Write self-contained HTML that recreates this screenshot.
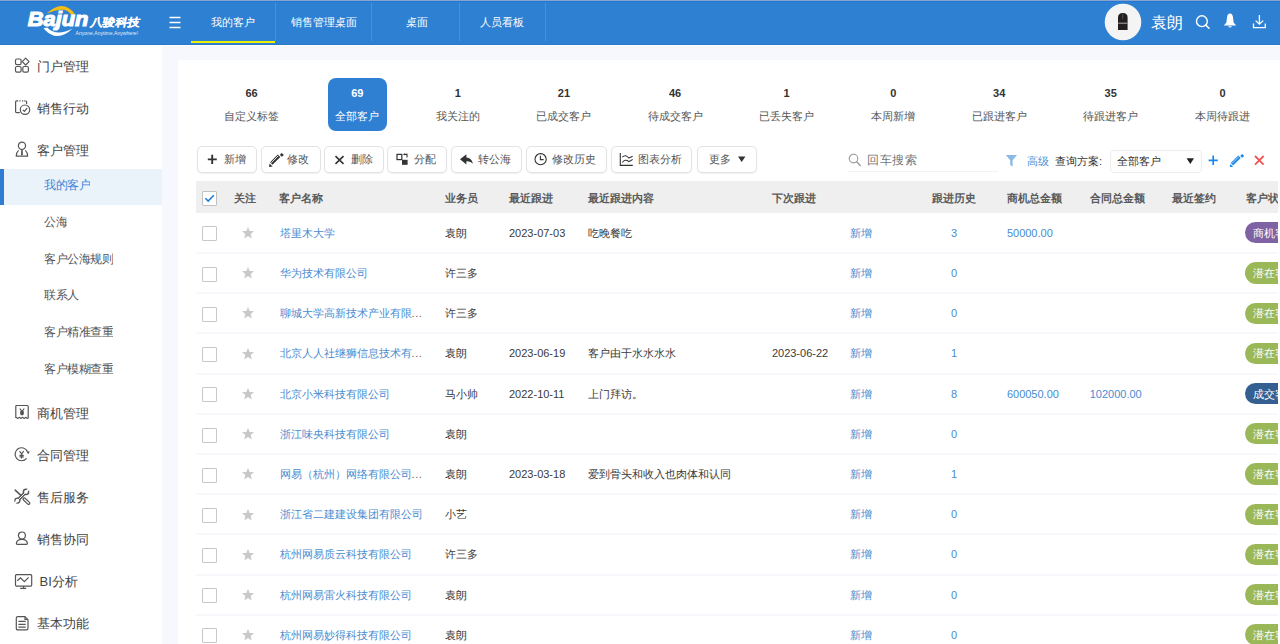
<!DOCTYPE html><html><head><meta charset="utf-8"><style>
html,body{margin:0;padding:0;width:1280px;height:644px;overflow:hidden;background:#fff;font-family:'Liberation Sans',sans-serif}
.t{position:absolute;white-space:nowrap}
svg{overflow:visible}
</style></head><body>
<div style="position:absolute;left:0px;top:0px;width:1280px;height:45px;background:#2e80d2"></div>
<div style="position:absolute;left:0px;top:0px;width:1280px;height:1px;background:#85a4d2"></div>
<div style="position:absolute;left:0px;top:1px;width:1280px;height:1px;background:#2577d0"></div>
<div style="position:absolute;left:0px;top:44px;width:1280px;height:1px;background:#2a78c8"></div>
<svg style="position:absolute;left:20px;top:0px" width="130" height="44" viewBox="0 0 130 44">
<path d="M26.3 13.8 Q43.35 -2 55.2 14.6 L51 14.8 Q46.25 5 26.3 13.8 Z" fill="#f6bd16"/>
<path d="M23.4 28.2 Q36.9 43.75 52.6 28.6 Q36.2 36.95 27.2 27.4 Z" fill="#fff"/>
<text x="7.8" y="25.9" font-family="Liberation Sans" font-weight="bold" font-style="italic" font-size="20" fill="#fff" stroke="#fff" stroke-width="1.1" textLength="60.6" lengthAdjust="spacingAndGlyphs">Bajun</text>
<text x="75.2" y="25.6" transform="skewX(-11)" font-weight="bold" font-size="11" fill="#fff" stroke="#fff" stroke-width="0.15" textLength="49" lengthAdjust="spacingAndGlyphs">八骏科技</text>
<text x="55.6" y="35.2" font-family="Liberation Sans" font-size="5" fill="#fff" fill-opacity="0.9" textLength="62.5" lengthAdjust="spacingAndGlyphs">Anyone,Anytime,Anywhere!</text>
</svg>
<svg style="position:absolute;left:169px;top:16px" width="13" height="13" viewBox="0 0 13 13"><path d="M0.5 1.5H11.5M0.5 6.5H11.5M0.5 11.5H11.5" stroke="#fff" stroke-width="1.4"/></svg>
<div class="t" style="left:83.00px;width:300px;text-align:center;top:11.70px;font-size:11px;line-height:20px;color:#fff;font-weight:normal;">我的客户</div>
<div class="t" style="left:173.60px;width:300px;text-align:center;top:11.70px;font-size:11px;line-height:20px;color:#fff;font-weight:normal;">销售管理桌面</div>
<div class="t" style="left:267.30px;width:300px;text-align:center;top:11.70px;font-size:11px;line-height:20px;color:#fff;font-weight:normal;">桌面</div>
<div class="t" style="left:352.30px;width:300px;text-align:center;top:11.70px;font-size:11px;line-height:20px;color:#fff;font-weight:normal;">人员看板</div>
<div style="position:absolute;left:191px;top:41px;width:84px;height:2px;background:#eef000"></div>
<div style="position:absolute;left:275px;top:3px;width:1px;height:38px;background:rgba(255,255,255,0.13)"></div>
<div style="position:absolute;left:371px;top:3px;width:1px;height:38px;background:rgba(255,255,255,0.13)"></div>
<div style="position:absolute;left:459px;top:3px;width:1px;height:38px;background:rgba(255,255,255,0.13)"></div>
<div style="position:absolute;left:545px;top:3px;width:1px;height:38px;background:rgba(255,255,255,0.13)"></div>
<svg style="position:absolute;left:1104px;top:3px" width="38" height="38" viewBox="0 0 38 38"><circle cx="19" cy="19" r="18.3" fill="#f4f4f4"/>
<path d="M14 26.9 V14.5 Q14 10 18.9 10 Q23.6 10 23.6 14.5 V26.9 Z" fill="#231f20"/>
<path d="M14.2 20.2 H23.4" stroke="#e8e8e8" stroke-width="0.7"/>
<path d="M18.8 11 V16" stroke="#888" stroke-width="0.5"/></svg>
<div class="t" style="left:1151px;top:10.50px;font-size:16px;line-height:24px;color:#fff;font-weight:normal;">袁朗</div>
<svg style="position:absolute;left:1194px;top:13px" width="18" height="18" viewBox="0 0 18 18"><circle cx="7.9" cy="8.2" r="5.4" fill="none" stroke="#fff" stroke-width="1.4"/><path d="M11.8 12.1 L15 15.3" stroke="#fff" stroke-width="1.5" stroke-linecap="round"/></svg>
<svg style="position:absolute;left:1222px;top:12px" width="16" height="17" viewBox="0 0 16 17"><path d="M8 1.6 Q10.6 1.6 11 5.5 L11.6 10.6 L14.2 13.4 H1.8 L4.4 10.6 L5 5.5 Q5.4 1.6 8 1.6 Z" fill="#fff"/><path d="M6.2 14.2 H9.8 Q9.6 15.6 8 15.6 Q6.4 15.6 6.2 14.2Z" fill="#fff"/></svg>
<svg style="position:absolute;left:1251px;top:13px" width="17" height="17" viewBox="0 0 17 17"><path d="M8.4 2 V11" stroke="#fff" stroke-width="1.3"/><path d="M4.6 7.6 L8.4 11.2 L12.2 7.6" fill="none" stroke="#fff" stroke-width="1.3"/><path d="M2.5 10.5 V14.6 H14.3 V10.5" fill="none" stroke="#fff" stroke-width="1.3"/></svg>
<div style="position:absolute;left:0px;top:45px;width:162px;height:599px;background:#fff"></div>
<div style="position:absolute;left:162px;top:45px;width:1118px;height:599px;background:#f6f8fd"></div>
<div style="position:absolute;left:162px;top:45px;width:1118px;height:1px;background:#fff"></div>
<div style="position:absolute;left:0px;top:169px;width:162px;height:36px;background:#ebf3fa"></div>
<div style="position:absolute;left:0px;top:169px;width:4px;height:36px;background:#2e7dd2"></div>
<div class="t" style="left:36.6px;top:56.50px;font-size:13px;line-height:20px;color:#444;font-weight:normal;">门户管理</div>
<div class="t" style="left:36.6px;top:98.80px;font-size:13px;line-height:20px;color:#444;font-weight:normal;">销售行动</div>
<div class="t" style="left:36.6px;top:140.80px;font-size:13px;line-height:20px;color:#444;font-weight:normal;">客户管理</div>
<div class="t" style="left:36.6px;top:403.80px;font-size:13px;line-height:20px;color:#444;font-weight:normal;">商机管理</div>
<div class="t" style="left:36.6px;top:446.00px;font-size:13px;line-height:20px;color:#444;font-weight:normal;">合同管理</div>
<div class="t" style="left:36.6px;top:487.90px;font-size:13px;line-height:20px;color:#444;font-weight:normal;">售后服务</div>
<div class="t" style="left:36.6px;top:530.20px;font-size:13px;line-height:20px;color:#444;font-weight:normal;">销售协同</div>
<div class="t" style="left:39.6px;top:572.10px;font-size:13px;line-height:20px;color:#444;font-weight:normal;">BI分析</div>
<div class="t" style="left:36.6px;top:614.30px;font-size:13px;line-height:20px;color:#444;font-weight:normal;">基本功能</div>
<div class="t" style="left:44px;top:175.00px;font-size:23.0px;line-height:40px;color:#3a84d6;font-weight:normal;transform:scale(0.5);transform-origin:0 0;">我的客户</div>
<div class="t" style="left:44px;top:211.70px;font-size:23.0px;line-height:40px;color:#555;font-weight:normal;transform:scale(0.5);transform-origin:0 0;">公海</div>
<div class="t" style="left:44px;top:248.60px;font-size:23.0px;line-height:40px;color:#555;font-weight:normal;transform:scale(0.5);transform-origin:0 0;">客户公海规则</div>
<div class="t" style="left:44px;top:285.30px;font-size:23.0px;line-height:40px;color:#555;font-weight:normal;transform:scale(0.5);transform-origin:0 0;">联系人</div>
<div class="t" style="left:44px;top:322.30px;font-size:23.0px;line-height:40px;color:#555;font-weight:normal;transform:scale(0.5);transform-origin:0 0;">客户精准查重</div>
<div class="t" style="left:44px;top:358.70px;font-size:23.0px;line-height:40px;color:#555;font-weight:normal;transform:scale(0.5);transform-origin:0 0;">客户模糊查重</div>
<svg style="position:absolute;left:14px;top:57px" width="16" height="16" viewBox="0 0 16 16"><rect x="1.5" y="2" width="5.6" height="5.6" rx="1.4" fill="none" stroke="#555" stroke-width="1.2"/><rect x="1.5" y="9.5" width="5.6" height="5.6" rx="1.4" fill="none" stroke="#555" stroke-width="1.2"/><rect x="8.8" y="9.5" width="5.6" height="5.6" rx="1.4" fill="none" stroke="#555" stroke-width="1.2"/><path d="M11.65 1.2 L15.05 4.6 L11.65 8 L8.25 4.6 Z" stroke-linejoin="round" fill="none" stroke="#555" stroke-width="1.2"/></svg>
<svg style="position:absolute;left:14px;top:99px" width="17" height="17" viewBox="0 0 17 17"><path d="M5.8 13.6 H2.8 Q1.6 13.6 1.6 12.4 V3 Q1.6 1.9 2.8 1.9 H4.2" fill="none" stroke="#555" stroke-width="1.2"/><path d="M5.4 1.9 H6.6 M8 1.9 H9 M9.8 1.9 H10.8" fill="none" stroke="#555" stroke-width="1.2"/><path d="M11.4 1.9 Q12.6 1.9 12.6 3.1 V5" fill="none" stroke="#555" stroke-width="1.2"/><circle cx="11" cy="10.7" r="4.7" fill="none" stroke="#555" stroke-width="1.2"/><path d="M8.9 10.8 L10.5 12.4 L13.1 9.2" fill="none" stroke="#555" stroke-width="1.2"/></svg>
<svg style="position:absolute;left:15px;top:141px" width="15" height="17" viewBox="0 0 15 17"><circle cx="6.95" cy="4.8" r="3.6" fill="none" stroke="#555" stroke-width="1.2"/><path d="M3.6 9.4 Q1.3 11.3 1.3 15.2 H12.6 Q12.6 11.3 10.3 9.4" fill="none" stroke="#555" stroke-width="1.2"/><path d="M6.2 8.9 H7.7 L7.9 13.4 L6.95 14.4 L6 13.4 Z" fill="#555"/></svg>
<svg style="position:absolute;left:14px;top:404px" width="16" height="16" viewBox="0 0 16 16"><path d="M1.8 13.9 V2.4 Q1.8 1.5 2.7 1.5 H13.3 Q14.2 1.5 14.2 2.4 V13.9 Q13.4 14.9 12.6 13.9 Q11.8 12.9 11 13.9 Q10.2 14.9 9.4 13.9 Q8.6 12.9 7.8 13.9 Q7 14.9 6.2 13.9 Q5.4 12.9 4.6 13.9 Q3.8 14.9 3 13.9 Q2.4 13.2 1.8 13.9" fill="none" stroke="#555" stroke-width="1.2"/><path d="M5.8 4.5 L8 7.5 L10.2 4.5" fill="none" stroke="#555" stroke-width="1.2"/><ellipse cx="8" cy="9" rx="2" ry="2.4" fill="#555"/></svg>
<svg style="position:absolute;left:14px;top:446px" width="17" height="17" viewBox="0 0 17 17"><path d="M12.58 12.43 A6.5 6.5 0 1 1 13.49 5.5" fill="none" stroke="#555" stroke-width="1.2"/><path d="M12.4 5.2 L15.8 5.4 L14.2 8.2 Z" fill="#555"/><path d="M5.5 5.2 L7.6 7.8 L9.7 5.2 M7.6 7.8 V12.4 M5.5 9.3 H9.7 M5.5 10.9 H9.7" fill="none" stroke="#555" stroke-width="1.15"/></svg>
<svg style="position:absolute;left:14px;top:488px" width="17" height="17" viewBox="0 0 17 17"><path d="M1.2 2.1 L7.2 7.6" stroke="#555" stroke-width="1.5" stroke-linecap="round"/><path d="M3.4 12.6 L12 3.9" stroke="#555" stroke-width="3.4"/><circle cx="12" cy="3.9" r="3.3" fill="#555"/><circle cx="3.4" cy="12.6" r="3.1" fill="#555"/><path d="M3.4 12.6 L12 3.9" stroke="#fff" stroke-width="1"/><circle cx="12" cy="3.9" r="1.9" fill="#fff"/><circle cx="3.4" cy="12.6" r="1.8" fill="#fff"/><path d="M12 3.9 L16 -0.1" stroke="#fff" stroke-width="2"/><path d="M3.4 12.6 L-0.6 16.6" stroke="#fff" stroke-width="2"/><path d="M10.3 11.1 L14.6 15.2" stroke="#555" stroke-width="3.6" stroke-linecap="round"/><path d="M10.3 11.1 L14.6 15.2" stroke="#fff" stroke-width="1.2" stroke-linecap="round"/></svg>
<svg style="position:absolute;left:15px;top:531px" width="15" height="15" viewBox="0 0 15 15"><circle cx="6.9" cy="4.5" r="3.5" fill="none" stroke="#555" stroke-width="1.2"/><path d="M1.4 12.4 Q1.8 8.4 6.9 8.4 Q12 8.4 12.4 12.4 Q12.5 13.4 11.4 13.4 H2.4 Q1.3 13.4 1.4 12.4 Z" fill="none" stroke="#555" stroke-width="1.2"/></svg>
<svg style="position:absolute;left:14px;top:573px" width="19" height="17" viewBox="0 0 19 17"><rect x="1.5" y="1.7" width="16.2" height="11.4" rx="1" fill="none" stroke="#555" stroke-width="1.2"/><path d="M3.3 7.7 L6.5 4.8 L10.4 8.6 L14.6 4.3" fill="none" stroke="#555" stroke-width="1.2"/><path d="M9.6 13 V15" fill="none" stroke="#555" stroke-width="1.2"/><path d="M6.2 15.4 H12.2" stroke="#555" stroke-width="1.3"/></svg>
<svg style="position:absolute;left:15px;top:615px" width="15" height="17" viewBox="0 0 15 17"><path d="M2.9 1.7 H10 L13 4.7 V13.3 Q13 14.9 11.4 14.9 H2.9 Q1.3 14.9 1.3 13.3 V3.3 Q1.3 1.7 2.9 1.7 Z" fill="none" stroke="#555" stroke-width="1.2"/><path d="M10 1.9 V4.5 H12.8" fill="none" stroke="#555" stroke-width="1.2"/><path d="M3.4 6.4 H10.7 M3.4 9.3 H10.7 M3.4 12.1 H10.7" stroke="#555" stroke-width="1.3"/></svg>
<div style="position:absolute;left:178px;top:60px;width:1102px;height:584px;background:#fff"></div>
<div style="position:absolute;left:328px;top:78px;width:59px;height:53px;background:#2f80d3;border-radius:8px"></div>
<div class="t" style="left:101.50px;width:300px;text-align:center;top:83.20px;font-size:11px;line-height:20px;color:#333;font-weight:bold;">66</div>
<div class="t" style="left:101.50px;width:300px;text-align:center;top:106.00px;font-size:11px;line-height:20px;color:#555;font-weight:normal;">自定义标签</div>
<div class="t" style="left:207.30px;width:300px;text-align:center;top:83.20px;font-size:11px;line-height:20px;color:#fff;font-weight:bold;">69</div>
<div class="t" style="left:207.30px;width:300px;text-align:center;top:106.00px;font-size:11px;line-height:20px;color:#fff;font-weight:normal;">全部客户</div>
<div class="t" style="left:307.80px;width:300px;text-align:center;top:83.20px;font-size:11px;line-height:20px;color:#333;font-weight:bold;">1</div>
<div class="t" style="left:307.80px;width:300px;text-align:center;top:106.00px;font-size:11px;line-height:20px;color:#555;font-weight:normal;">我关注的</div>
<div class="t" style="left:413.90px;width:300px;text-align:center;top:83.20px;font-size:11px;line-height:20px;color:#333;font-weight:bold;">21</div>
<div class="t" style="left:413.90px;width:300px;text-align:center;top:106.00px;font-size:11px;line-height:20px;color:#555;font-weight:normal;">已成交客户</div>
<div class="t" style="left:525.10px;width:300px;text-align:center;top:83.20px;font-size:11px;line-height:20px;color:#333;font-weight:bold;">46</div>
<div class="t" style="left:525.10px;width:300px;text-align:center;top:106.00px;font-size:11px;line-height:20px;color:#555;font-weight:normal;">待成交客户</div>
<div class="t" style="left:636.60px;width:300px;text-align:center;top:83.20px;font-size:11px;line-height:20px;color:#333;font-weight:bold;">1</div>
<div class="t" style="left:636.60px;width:300px;text-align:center;top:106.00px;font-size:11px;line-height:20px;color:#555;font-weight:normal;">已丢失客户</div>
<div class="t" style="left:743.20px;width:300px;text-align:center;top:83.20px;font-size:11px;line-height:20px;color:#333;font-weight:bold;">0</div>
<div class="t" style="left:743.20px;width:300px;text-align:center;top:106.00px;font-size:11px;line-height:20px;color:#555;font-weight:normal;">本周新增</div>
<div class="t" style="left:849.20px;width:300px;text-align:center;top:83.20px;font-size:11px;line-height:20px;color:#333;font-weight:bold;">34</div>
<div class="t" style="left:849.20px;width:300px;text-align:center;top:106.00px;font-size:11px;line-height:20px;color:#555;font-weight:normal;">已跟进客户</div>
<div class="t" style="left:960.70px;width:300px;text-align:center;top:83.20px;font-size:11px;line-height:20px;color:#333;font-weight:bold;">35</div>
<div class="t" style="left:960.70px;width:300px;text-align:center;top:106.00px;font-size:11px;line-height:20px;color:#555;font-weight:normal;">待跟进客户</div>
<div class="t" style="left:1072.50px;width:300px;text-align:center;top:83.20px;font-size:11px;line-height:20px;color:#333;font-weight:bold;">0</div>
<div class="t" style="left:1072.50px;width:300px;text-align:center;top:106.00px;font-size:11px;line-height:20px;color:#555;font-weight:normal;">本周待跟进</div>
<div style="position:absolute;left:197px;top:146px;width:60px;height:27px;box-sizing:border-box;border:1px solid #e3e3e3;border-radius:5px;background:#fff;box-shadow:0 1px 1px rgba(0,0,0,0.06)"></div>
<div style="position:absolute;left:261px;top:146px;width:59.5px;height:27px;box-sizing:border-box;border:1px solid #e3e3e3;border-radius:5px;background:#fff;box-shadow:0 1px 1px rgba(0,0,0,0.06)"></div>
<div style="position:absolute;left:324px;top:146px;width:60px;height:27px;box-sizing:border-box;border:1px solid #e3e3e3;border-radius:5px;background:#fff;box-shadow:0 1px 1px rgba(0,0,0,0.06)"></div>
<div style="position:absolute;left:387px;top:146px;width:60px;height:27px;box-sizing:border-box;border:1px solid #e3e3e3;border-radius:5px;background:#fff;box-shadow:0 1px 1px rgba(0,0,0,0.06)"></div>
<div style="position:absolute;left:451px;top:146px;width:71px;height:27px;box-sizing:border-box;border:1px solid #e3e3e3;border-radius:5px;background:#fff;box-shadow:0 1px 1px rgba(0,0,0,0.06)"></div>
<div style="position:absolute;left:526px;top:146px;width:81px;height:27px;box-sizing:border-box;border:1px solid #e3e3e3;border-radius:5px;background:#fff;box-shadow:0 1px 1px rgba(0,0,0,0.06)"></div>
<div style="position:absolute;left:611px;top:146px;width:81px;height:27px;box-sizing:border-box;border:1px solid #e3e3e3;border-radius:5px;background:#fff;box-shadow:0 1px 1px rgba(0,0,0,0.06)"></div>
<div style="position:absolute;left:697px;top:146px;width:59.5px;height:27px;box-sizing:border-box;border:1px solid #e3e3e3;border-radius:5px;background:#fff;box-shadow:0 1px 1px rgba(0,0,0,0.06)"></div>
<div class="t" style="left:223.6px;top:148.80px;font-size:11px;line-height:20px;color:#555;font-weight:normal;">新增</div>
<div class="t" style="left:287px;top:148.80px;font-size:11px;line-height:20px;color:#555;font-weight:normal;">修改</div>
<div class="t" style="left:350.6px;top:148.80px;font-size:11px;line-height:20px;color:#555;font-weight:normal;">删除</div>
<div class="t" style="left:414px;top:148.80px;font-size:11px;line-height:20px;color:#555;font-weight:normal;">分配</div>
<div class="t" style="left:477.75px;top:148.80px;font-size:11px;line-height:20px;color:#555;font-weight:normal;">转公海</div>
<div class="t" style="left:551.9px;top:148.80px;font-size:11px;line-height:20px;color:#555;font-weight:normal;">修改历史</div>
<div class="t" style="left:637.75px;top:148.80px;font-size:11px;line-height:20px;color:#555;font-weight:normal;">图表分析</div>
<div class="t" style="left:708.5px;top:148.80px;font-size:11px;line-height:20px;color:#555;font-weight:normal;">更多</div>
<svg style="position:absolute;left:207px;top:154px" width="11" height="11" viewBox="0 0 11 11"><path d="M5.2 0.8 V10 M0.8 5.4 H9.8" stroke="#333" stroke-width="1.9"/></svg>
<svg style="position:absolute;left:268px;top:152px" width="16" height="16" viewBox="0 0 16 16"><path d="M3.3 11.5 L11.1 3.7" stroke="#333" stroke-width="3.4"/><path d="M3.4 10.7 L10.4 3.7" stroke="#fff" stroke-width="0.9"/><path d="M1 15 L1.5 11.4 L4.6 14.5 Z" fill="#333"/><path d="M11.9 2.9 L13.1 1.4 Q13.7 0.8 14.3 1.4 L15.3 2.4 Q15.9 3 15.3 3.6 L13.8 4.8 Z" fill="#333"/></svg>
<svg style="position:absolute;left:334px;top:155px" width="11" height="10" viewBox="0 0 11 10"><path d="M1.5 1.1 L9.5 8.9 M9.5 1.1 L1.5 8.9" stroke="#333" stroke-width="1.6"/></svg>
<svg style="position:absolute;left:396px;top:153px" width="13" height="13" viewBox="0 0 13 13"><rect x="1" y="1.4" width="4.8" height="5.2" fill="none" stroke="#333" stroke-width="1.2"/><rect x="6" y="6.8" width="5.6" height="5" fill="#333"/><path d="M8 1.4 H11 V4.6" fill="none" stroke="#333" stroke-width="1.1"/><path d="M7 1.4 L8.6 0.2 V2.6Z" fill="#333"/></svg>
<svg style="position:absolute;left:459px;top:153px" width="15" height="13" viewBox="0 0 15 13"><path d="M1 6.3 L7.4 1.2 V4.4 Q12.6 4.6 13.9 10.7 Q11.8 7.8 7.4 8.2 V11.4 Z" fill="#333"/></svg>
<svg style="position:absolute;left:534px;top:152px" width="14" height="14" viewBox="0 0 14 14"><circle cx="6.6" cy="7.2" r="5.6" fill="none" stroke="#333" stroke-width="1.1"/><path d="M6.4 3.8 V7.6 H9.6" fill="none" stroke="#333" stroke-width="1.1"/></svg>
<svg style="position:absolute;left:619px;top:152px" width="15" height="15" viewBox="0 0 15 15"><path d="M1.3 1 V13.4 H13.8" fill="none" stroke="#333" stroke-width="1.1"/><path d="M3.3 5.2 Q6.5 2 9.8 6 Q11.6 5.4 13.6 4.2 M3.3 10.5 Q6.5 6.6 9.8 9.6 Q11.6 9 13.6 7.4" fill="none" stroke="#333" stroke-width="1.1"/></svg>
<svg style="position:absolute;left:737px;top:155px" width="9" height="8" viewBox="0 0 9 8"><path d="M1 1.4 H8.4 L4.7 7 Z" fill="#333"/></svg>
<svg style="position:absolute;left:847px;top:153px" width="16" height="16" viewBox="0 0 16 16"><circle cx="6.5" cy="5.6" r="4.3" fill="none" stroke="#999" stroke-width="1.1"/><path d="M9.6 8.8 L13.6 13.1" stroke="#999" stroke-width="1.4"/></svg>
<div class="t" style="left:867.3px;top:150.30px;font-size:24.6px;line-height:40px;color:#777;font-weight:normal;transform:scale(0.5);transform-origin:0 0;">回车搜索</div>
<div style="position:absolute;left:848px;top:171px;width:150px;height:1px;background:#f0f4f7"></div>
<svg style="position:absolute;left:1005px;top:154px" width="13" height="13" viewBox="0 0 13 13"><path d="M0.8 1 H12 L7.6 6.2 V12.4 L5.2 11 V6.2 Z" fill="#8bb9e6"/></svg>
<div class="t" style="left:1027.3px;top:151.00px;font-size:11px;line-height:20px;color:#4a90d9;font-weight:normal;">高级</div>
<div class="t" style="left:1055px;top:151.00px;font-size:11px;line-height:20px;color:#333;font-weight:normal;">查询方案:</div>
<div style="position:absolute;left:1110px;top:150px;width:92px;height:23px;box-sizing:border-box;border:1px solid #ececec;border-radius:4px;background:#fff"></div>
<div class="t" style="left:1117px;top:150.80px;font-size:11px;line-height:20px;color:#333;font-weight:normal;">全部客户</div>
<svg style="position:absolute;left:1186px;top:157px" width="9" height="8" viewBox="0 0 9 8"><path d="M0.6 1.2 H8 L4.3 7 Z" fill="#222"/></svg>
<svg style="position:absolute;left:1208px;top:155px" width="11" height="11" viewBox="0 0 11 11"><path d="M5.2 0.6 V10 M0.6 5.3 H9.8" stroke="#1a88e8" stroke-width="1.7"/></svg>
<svg style="position:absolute;left:1228px;top:152px" width="16" height="16" viewBox="0 0 16 16"><path d="M3.9 12.3 L11.5 4.7" stroke="#1a88e8" stroke-width="3.4"/><path d="M4 11.5 L10.8 4.7" stroke="#cfe3fa" stroke-width="0.8"/><path d="M1.8 15 L2.2 11.9 L5.2 14.9 Z" fill="#1a88e8"/><path d="M12.3 3.9 L13.5 2.4 Q14.1 1.8 14.7 2.4 L15.7 3.4 Q16.3 4 15.7 4.6 L14.2 5.8 Z" fill="#1a88e8"/></svg>
<svg style="position:absolute;left:1254px;top:155px" width="11" height="11" viewBox="0 0 11 11"><path d="M1 1 L9.6 9.6 M9.6 1 L1 9.6" stroke="#f05656" stroke-width="1.8"/></svg>
<div style="position:absolute;left:196px;top:181px;width:1082px;height:463px;overflow:hidden">
<div style="position:absolute;left:0.00px;top:0.00px;width:1100px;height:32px;background:#efefef"></div>
<div style="position:absolute;left:6.00px;top:10.00px;width:15px;height:15px;box-sizing:border-box;border:1px solid #c2c2c2;border-radius:1px;background:#fff"></div>
<svg style="position:absolute;left:6px;top:9px" width="15" height="16"><path d="M3.4 8.2 L6.2 11 L11.8 5.2" fill="none" stroke="#1e7fd8" stroke-width="1.6"/></svg>
<div class="t" style="left:37.50px;top:7.00px;font-size:11px;line-height:20px;color:#5a5a5a;font-weight:bold;">关注</div>
<div class="t" style="left:83.40px;top:7.00px;font-size:11px;line-height:20px;color:#5a5a5a;font-weight:bold;">客户名称</div>
<div class="t" style="left:248.75px;top:7.00px;font-size:11px;line-height:20px;color:#5a5a5a;font-weight:bold;">业务员</div>
<div class="t" style="left:313.00px;top:7.00px;font-size:11px;line-height:20px;color:#5a5a5a;font-weight:bold;">最近跟进</div>
<div class="t" style="left:391.80px;top:7.00px;font-size:11px;line-height:20px;color:#5a5a5a;font-weight:bold;">最近跟进内容</div>
<div class="t" style="left:575.60px;top:7.00px;font-size:11px;line-height:20px;color:#5a5a5a;font-weight:bold;">下次跟进</div>
<div class="t" style="left:736.20px;top:7.00px;font-size:11px;line-height:20px;color:#5a5a5a;font-weight:bold;">跟进历史</div>
<div class="t" style="left:810.60px;top:7.00px;font-size:11px;line-height:20px;color:#5a5a5a;font-weight:bold;">商机总金额</div>
<div class="t" style="left:893.70px;top:7.00px;font-size:11px;line-height:20px;color:#5a5a5a;font-weight:bold;">合同总金额</div>
<div class="t" style="left:975.70px;top:7.00px;font-size:11px;line-height:20px;color:#5a5a5a;font-weight:bold;">最近签约</div>
<div class="t" style="left:1049.50px;top:7.00px;font-size:11px;line-height:20px;color:#5a5a5a;font-weight:bold;">客户状态</div>
<div style="position:absolute;left:0.00px;top:71.00px;width:1100px;height:2px;background:#f7f8fc"></div>
<div style="position:absolute;left:6.00px;top:45.00px;width:15px;height:15px;box-sizing:border-box;border:1px solid #c8c8c8;border-radius:1px;background:#fff"></div>
<svg style="position:absolute;left:45px;top:45px" width="14" height="14"><path d="M7 0.8 L8.6 5 L13.1 5.2 L9.6 8 L10.8 12.4 L7 9.9 L3.2 12.4 L4.4 8 L0.9 5.2 L5.4 5 Z" fill="#c8c8c8"/></svg>
<div class="t" style="left:83.60px;top:41.70px;font-size:11px;line-height:20px;color:#4a8cd0;font-weight:normal;">塔里木大学</div>
<div class="t" style="left:248.75px;top:41.70px;font-size:11px;line-height:20px;color:#3a3a3a;font-weight:normal;">袁朗</div>
<div class="t" style="left:313.00px;top:41.70px;font-size:11px;line-height:20px;color:#3a3a3a;font-weight:normal;">2023-07-03</div>
<div class="t" style="left:391.80px;top:41.70px;font-size:11px;line-height:20px;color:#3a3a3a;font-weight:normal;">吃晚餐吃</div>
<div class="t" style="left:653.90px;top:41.70px;font-size:11px;line-height:20px;color:#4a8cd0;font-weight:normal;">新增</div>
<div class="t" style="left:658.00px;width:200px;text-align:center;top:41.70px;font-size:11px;line-height:20px;color:#4a8cd0;font-weight:normal">3</div>
<div class="t" style="left:810.90px;top:41.70px;font-size:11px;line-height:20px;color:#4a8cd0;font-weight:normal;">50000.00</div>
<div style="position:absolute;left:1049.00px;top:41.10px;width:60px;height:21.4px;background:#7f62a4;border-radius:11px"></div>
<div class="t" style="left:1057.00px;top:41.70px;font-size:11px;line-height:20px;color:#fff;font-weight:normal;">商机客户</div>
<div style="position:absolute;left:0.00px;top:111.00px;width:1100px;height:2px;background:#f7f8fc"></div>
<div style="position:absolute;left:6.00px;top:86.00px;width:15px;height:15px;box-sizing:border-box;border:1px solid #c8c8c8;border-radius:1px;background:#fff"></div>
<svg style="position:absolute;left:45px;top:85px" width="14" height="14"><path d="M7 0.8 L8.6 5 L13.1 5.2 L9.6 8 L10.8 12.4 L7 9.9 L3.2 12.4 L4.4 8 L0.9 5.2 L5.4 5 Z" fill="#c8c8c8"/></svg>
<div class="t" style="left:83.60px;top:81.90px;font-size:11px;line-height:20px;color:#4a8cd0;font-weight:normal;">华为技术有限公司</div>
<div class="t" style="left:248.75px;top:81.90px;font-size:11px;line-height:20px;color:#3a3a3a;font-weight:normal;">许三多</div>
<div class="t" style="left:653.90px;top:81.90px;font-size:11px;line-height:20px;color:#4a8cd0;font-weight:normal;">新增</div>
<div class="t" style="left:658.00px;width:200px;text-align:center;top:81.90px;font-size:11px;line-height:20px;color:#4a8cd0;font-weight:normal">0</div>
<div style="position:absolute;left:1049.00px;top:81.30px;width:60px;height:21.4px;background:#9bb859;border-radius:11px"></div>
<div class="t" style="left:1057.00px;top:81.90px;font-size:11px;line-height:20px;color:#fff;font-weight:normal;">潜在客户</div>
<div style="position:absolute;left:0.00px;top:151.00px;width:1100px;height:2px;background:#f7f8fc"></div>
<div style="position:absolute;left:6.00px;top:126.00px;width:15px;height:15px;box-sizing:border-box;border:1px solid #c8c8c8;border-radius:1px;background:#fff"></div>
<svg style="position:absolute;left:45px;top:125px" width="14" height="14"><path d="M7 0.8 L8.6 5 L13.1 5.2 L9.6 8 L10.8 12.4 L7 9.9 L3.2 12.4 L4.4 8 L0.9 5.2 L5.4 5 Z" fill="#c8c8c8"/></svg>
<div class="t" style="left:83.60px;top:122.10px;font-size:11px;line-height:20px;color:#4a8cd0;font-weight:normal;">聊城大学高新技术产业有限<span style="color:#666;letter-spacing:0.5px">...</span></div>
<div class="t" style="left:248.75px;top:122.10px;font-size:11px;line-height:20px;color:#3a3a3a;font-weight:normal;">许三多</div>
<div class="t" style="left:653.90px;top:122.10px;font-size:11px;line-height:20px;color:#4a8cd0;font-weight:normal;">新增</div>
<div class="t" style="left:658.00px;width:200px;text-align:center;top:122.10px;font-size:11px;line-height:20px;color:#4a8cd0;font-weight:normal">0</div>
<div style="position:absolute;left:1049.00px;top:121.50px;width:60px;height:21.4px;background:#9bb859;border-radius:11px"></div>
<div class="t" style="left:1057.00px;top:122.10px;font-size:11px;line-height:20px;color:#fff;font-weight:normal;">潜在客户</div>
<div style="position:absolute;left:0.00px;top:192.00px;width:1100px;height:2px;background:#f7f8fc"></div>
<div style="position:absolute;left:6.00px;top:166.00px;width:15px;height:15px;box-sizing:border-box;border:1px solid #c8c8c8;border-radius:1px;background:#fff"></div>
<svg style="position:absolute;left:45px;top:166px" width="14" height="14"><path d="M7 0.8 L8.6 5 L13.1 5.2 L9.6 8 L10.8 12.4 L7 9.9 L3.2 12.4 L4.4 8 L0.9 5.2 L5.4 5 Z" fill="#c8c8c8"/></svg>
<div class="t" style="left:83.60px;top:162.30px;font-size:11px;line-height:20px;color:#4a8cd0;font-weight:normal;">北京人人社继狮信息技术有<span style="color:#666;letter-spacing:0.5px">...</span></div>
<div class="t" style="left:248.75px;top:162.30px;font-size:11px;line-height:20px;color:#3a3a3a;font-weight:normal;">袁朗</div>
<div class="t" style="left:313.00px;top:162.30px;font-size:11px;line-height:20px;color:#3a3a3a;font-weight:normal;">2023-06-19</div>
<div class="t" style="left:391.80px;top:162.30px;font-size:11px;line-height:20px;color:#3a3a3a;font-weight:normal;">客户由于水水水水</div>
<div class="t" style="left:575.90px;top:162.30px;font-size:11px;line-height:20px;color:#3a3a3a;font-weight:normal;">2023-06-22</div>
<div class="t" style="left:653.90px;top:162.30px;font-size:11px;line-height:20px;color:#4a8cd0;font-weight:normal;">新增</div>
<div class="t" style="left:658.00px;width:200px;text-align:center;top:162.30px;font-size:11px;line-height:20px;color:#4a8cd0;font-weight:normal">1</div>
<div style="position:absolute;left:1049.00px;top:161.70px;width:60px;height:21.4px;background:#9bb859;border-radius:11px"></div>
<div class="t" style="left:1057.00px;top:162.30px;font-size:11px;line-height:20px;color:#fff;font-weight:normal;">潜在客户</div>
<div style="position:absolute;left:0.00px;top:232.00px;width:1100px;height:2px;background:#f7f8fc"></div>
<div style="position:absolute;left:6.00px;top:206.00px;width:15px;height:15px;box-sizing:border-box;border:1px solid #c8c8c8;border-radius:1px;background:#fff"></div>
<svg style="position:absolute;left:45px;top:206px" width="14" height="14"><path d="M7 0.8 L8.6 5 L13.1 5.2 L9.6 8 L10.8 12.4 L7 9.9 L3.2 12.4 L4.4 8 L0.9 5.2 L5.4 5 Z" fill="#c8c8c8"/></svg>
<div class="t" style="left:83.60px;top:202.50px;font-size:11px;line-height:20px;color:#4a8cd0;font-weight:normal;">北京小米科技有限公司</div>
<div class="t" style="left:248.75px;top:202.50px;font-size:11px;line-height:20px;color:#3a3a3a;font-weight:normal;">马小帅</div>
<div class="t" style="left:313.00px;top:202.50px;font-size:11px;line-height:20px;color:#3a3a3a;font-weight:normal;">2022-10-11</div>
<div class="t" style="left:391.80px;top:202.50px;font-size:11px;line-height:20px;color:#3a3a3a;font-weight:normal;">上门拜访。</div>
<div class="t" style="left:653.90px;top:202.50px;font-size:11px;line-height:20px;color:#4a8cd0;font-weight:normal;">新增</div>
<div class="t" style="left:658.00px;width:200px;text-align:center;top:202.50px;font-size:11px;line-height:20px;color:#4a8cd0;font-weight:normal">8</div>
<div class="t" style="left:810.90px;top:202.50px;font-size:11px;line-height:20px;color:#4a8cd0;font-weight:normal;">600050.00</div>
<div class="t" style="left:893.70px;top:202.50px;font-size:11px;line-height:20px;color:#4a8cd0;font-weight:normal;">102000.00</div>
<div style="position:absolute;left:1049.00px;top:201.90px;width:60px;height:21.4px;background:#355f91;border-radius:11px"></div>
<div class="t" style="left:1057.00px;top:202.50px;font-size:11px;line-height:20px;color:#fff;font-weight:normal;">成交客户</div>
<div style="position:absolute;left:0.00px;top:272.00px;width:1100px;height:2px;background:#f7f8fc"></div>
<div style="position:absolute;left:6.00px;top:247.00px;width:15px;height:15px;box-sizing:border-box;border:1px solid #c8c8c8;border-radius:1px;background:#fff"></div>
<svg style="position:absolute;left:45px;top:246px" width="14" height="14"><path d="M7 0.8 L8.6 5 L13.1 5.2 L9.6 8 L10.8 12.4 L7 9.9 L3.2 12.4 L4.4 8 L0.9 5.2 L5.4 5 Z" fill="#c8c8c8"/></svg>
<div class="t" style="left:83.60px;top:242.70px;font-size:11px;line-height:20px;color:#4a8cd0;font-weight:normal;">浙江味央科技有限公司</div>
<div class="t" style="left:248.75px;top:242.70px;font-size:11px;line-height:20px;color:#3a3a3a;font-weight:normal;">袁朗</div>
<div class="t" style="left:653.90px;top:242.70px;font-size:11px;line-height:20px;color:#4a8cd0;font-weight:normal;">新增</div>
<div class="t" style="left:658.00px;width:200px;text-align:center;top:242.70px;font-size:11px;line-height:20px;color:#4a8cd0;font-weight:normal">0</div>
<div style="position:absolute;left:1049.00px;top:242.10px;width:60px;height:21.4px;background:#9bb859;border-radius:11px"></div>
<div class="t" style="left:1057.00px;top:242.70px;font-size:11px;line-height:20px;color:#fff;font-weight:normal;">潜在客户</div>
<div style="position:absolute;left:0.00px;top:312.00px;width:1100px;height:2px;background:#f7f8fc"></div>
<div style="position:absolute;left:6.00px;top:287.00px;width:15px;height:15px;box-sizing:border-box;border:1px solid #c8c8c8;border-radius:1px;background:#fff"></div>
<svg style="position:absolute;left:45px;top:286px" width="14" height="14"><path d="M7 0.8 L8.6 5 L13.1 5.2 L9.6 8 L10.8 12.4 L7 9.9 L3.2 12.4 L4.4 8 L0.9 5.2 L5.4 5 Z" fill="#c8c8c8"/></svg>
<div class="t" style="left:83.60px;top:282.90px;font-size:11px;line-height:20px;color:#4a8cd0;font-weight:normal;">网易（杭州）网络有限公司<span style="color:#666;letter-spacing:0.5px">...</span></div>
<div class="t" style="left:248.75px;top:282.90px;font-size:11px;line-height:20px;color:#3a3a3a;font-weight:normal;">袁朗</div>
<div class="t" style="left:313.00px;top:282.90px;font-size:11px;line-height:20px;color:#3a3a3a;font-weight:normal;">2023-03-18</div>
<div class="t" style="left:391.80px;top:282.90px;font-size:11px;line-height:20px;color:#3a3a3a;font-weight:normal;">爱到骨头和收入也肉体和认同</div>
<div class="t" style="left:653.90px;top:282.90px;font-size:11px;line-height:20px;color:#4a8cd0;font-weight:normal;">新增</div>
<div class="t" style="left:658.00px;width:200px;text-align:center;top:282.90px;font-size:11px;line-height:20px;color:#4a8cd0;font-weight:normal">1</div>
<div style="position:absolute;left:1049.00px;top:282.30px;width:60px;height:21.4px;background:#9bb859;border-radius:11px"></div>
<div class="t" style="left:1057.00px;top:282.90px;font-size:11px;line-height:20px;color:#fff;font-weight:normal;">潜在客户</div>
<div style="position:absolute;left:0.00px;top:352.00px;width:1100px;height:2px;background:#f7f8fc"></div>
<div style="position:absolute;left:6.00px;top:327.00px;width:15px;height:15px;box-sizing:border-box;border:1px solid #c8c8c8;border-radius:1px;background:#fff"></div>
<svg style="position:absolute;left:45px;top:327px" width="14" height="14"><path d="M7 0.8 L8.6 5 L13.1 5.2 L9.6 8 L10.8 12.4 L7 9.9 L3.2 12.4 L4.4 8 L0.9 5.2 L5.4 5 Z" fill="#c8c8c8"/></svg>
<div class="t" style="left:83.60px;top:323.10px;font-size:11px;line-height:20px;color:#4a8cd0;font-weight:normal;">浙江省二建建设集团有限公司</div>
<div class="t" style="left:248.75px;top:323.10px;font-size:11px;line-height:20px;color:#3a3a3a;font-weight:normal;">小艺</div>
<div class="t" style="left:653.90px;top:323.10px;font-size:11px;line-height:20px;color:#4a8cd0;font-weight:normal;">新增</div>
<div class="t" style="left:658.00px;width:200px;text-align:center;top:323.10px;font-size:11px;line-height:20px;color:#4a8cd0;font-weight:normal">0</div>
<div style="position:absolute;left:1049.00px;top:322.50px;width:60px;height:21.4px;background:#9bb859;border-radius:11px"></div>
<div class="t" style="left:1057.00px;top:323.10px;font-size:11px;line-height:20px;color:#fff;font-weight:normal;">潜在客户</div>
<div style="position:absolute;left:0.00px;top:393.00px;width:1100px;height:2px;background:#f7f8fc"></div>
<div style="position:absolute;left:6.00px;top:367.00px;width:15px;height:15px;box-sizing:border-box;border:1px solid #c8c8c8;border-radius:1px;background:#fff"></div>
<svg style="position:absolute;left:45px;top:367px" width="14" height="14"><path d="M7 0.8 L8.6 5 L13.1 5.2 L9.6 8 L10.8 12.4 L7 9.9 L3.2 12.4 L4.4 8 L0.9 5.2 L5.4 5 Z" fill="#c8c8c8"/></svg>
<div class="t" style="left:83.60px;top:363.30px;font-size:11px;line-height:20px;color:#4a8cd0;font-weight:normal;">杭州网易质云科技有限公司</div>
<div class="t" style="left:248.75px;top:363.30px;font-size:11px;line-height:20px;color:#3a3a3a;font-weight:normal;">许三多</div>
<div class="t" style="left:653.90px;top:363.30px;font-size:11px;line-height:20px;color:#4a8cd0;font-weight:normal;">新增</div>
<div class="t" style="left:658.00px;width:200px;text-align:center;top:363.30px;font-size:11px;line-height:20px;color:#4a8cd0;font-weight:normal">0</div>
<div style="position:absolute;left:1049.00px;top:362.70px;width:60px;height:21.4px;background:#9bb859;border-radius:11px"></div>
<div class="t" style="left:1057.00px;top:363.30px;font-size:11px;line-height:20px;color:#fff;font-weight:normal;">潜在客户</div>
<div style="position:absolute;left:0.00px;top:433.00px;width:1100px;height:2px;background:#f7f8fc"></div>
<div style="position:absolute;left:6.00px;top:407.00px;width:15px;height:15px;box-sizing:border-box;border:1px solid #c8c8c8;border-radius:1px;background:#fff"></div>
<svg style="position:absolute;left:45px;top:407px" width="14" height="14"><path d="M7 0.8 L8.6 5 L13.1 5.2 L9.6 8 L10.8 12.4 L7 9.9 L3.2 12.4 L4.4 8 L0.9 5.2 L5.4 5 Z" fill="#c8c8c8"/></svg>
<div class="t" style="left:83.60px;top:403.50px;font-size:11px;line-height:20px;color:#4a8cd0;font-weight:normal;">杭州网易雷火科技有限公司</div>
<div class="t" style="left:248.75px;top:403.50px;font-size:11px;line-height:20px;color:#3a3a3a;font-weight:normal;">袁朗</div>
<div class="t" style="left:653.90px;top:403.50px;font-size:11px;line-height:20px;color:#4a8cd0;font-weight:normal;">新增</div>
<div class="t" style="left:658.00px;width:200px;text-align:center;top:403.50px;font-size:11px;line-height:20px;color:#4a8cd0;font-weight:normal">0</div>
<div style="position:absolute;left:1049.00px;top:402.90px;width:60px;height:21.4px;background:#9bb859;border-radius:11px"></div>
<div class="t" style="left:1057.00px;top:403.50px;font-size:11px;line-height:20px;color:#fff;font-weight:normal;">潜在客户</div>
<div style="position:absolute;left:0.00px;top:473.00px;width:1100px;height:2px;background:#f7f8fc"></div>
<div style="position:absolute;left:6.00px;top:447.00px;width:15px;height:15px;box-sizing:border-box;border:1px solid #c8c8c8;border-radius:1px;background:#fff"></div>
<svg style="position:absolute;left:45px;top:447px" width="14" height="14"><path d="M7 0.8 L8.6 5 L13.1 5.2 L9.6 8 L10.8 12.4 L7 9.9 L3.2 12.4 L4.4 8 L0.9 5.2 L5.4 5 Z" fill="#c8c8c8"/></svg>
<div class="t" style="left:83.60px;top:443.70px;font-size:11px;line-height:20px;color:#4a8cd0;font-weight:normal;">杭州网易妙得科技有限公司</div>
<div class="t" style="left:248.75px;top:443.70px;font-size:11px;line-height:20px;color:#3a3a3a;font-weight:normal;">袁朗</div>
<div class="t" style="left:653.90px;top:443.70px;font-size:11px;line-height:20px;color:#4a8cd0;font-weight:normal;">新增</div>
<div class="t" style="left:658.00px;width:200px;text-align:center;top:443.70px;font-size:11px;line-height:20px;color:#4a8cd0;font-weight:normal">0</div>
<div style="position:absolute;left:1049.00px;top:443.10px;width:60px;height:21.4px;background:#9bb859;border-radius:11px"></div>
<div class="t" style="left:1057.00px;top:443.70px;font-size:11px;line-height:20px;color:#fff;font-weight:normal;">潜在客户</div>
</div>
</body></html>
